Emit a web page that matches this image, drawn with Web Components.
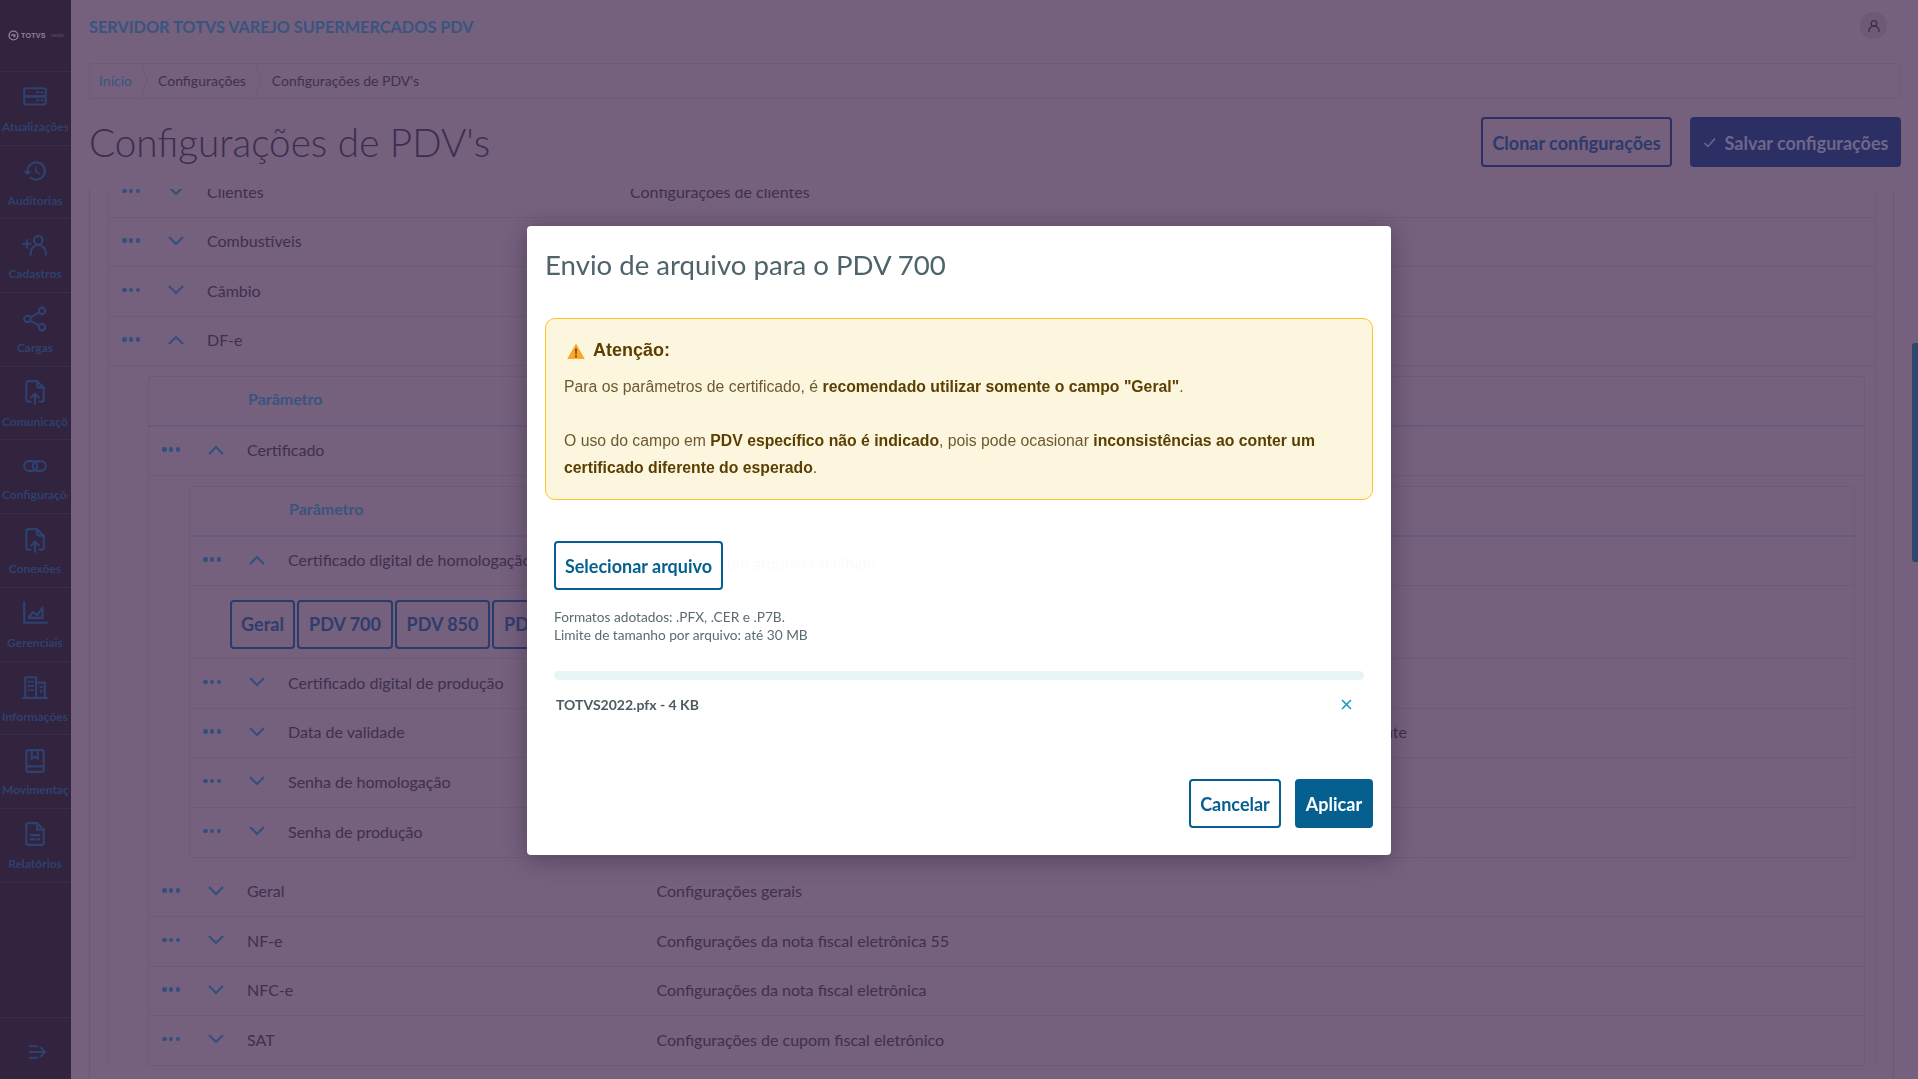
<!DOCTYPE html>
<html lang="pt-BR">
<head>
<meta charset="utf-8">
<title>Configurações de PDV's</title>
<style>
  html, body { margin: 0; height: 100%; overflow: hidden; }
  body {
    --app-font: Lato, "Noto Sans", sans-serif;
    font-family: var(--app-font);
    background: #75607d;
    display: flex;
    height: 1079px;
  }
</style>
</head>
<body>
<app-sidebar>
  <nav-item icon="server">Atualizações</nav-item>
  <nav-item icon="history">Auditorias</nav-item>
  <nav-item icon="adduser">Cadastros</nav-item>
  <nav-item icon="share">Cargas</nav-item>
  <nav-item icon="upload">Comunicações</nav-item>
  <nav-item icon="link">Configurações</nav-item>
  <nav-item icon="upload">Conexões</nav-item>
  <nav-item icon="chart">Gerenciais</nav-item>
  <nav-item icon="building">Informações</nav-item>
  <nav-item icon="book">Movimentações</nav-item>
  <nav-item icon="report">Relatórios</nav-item>
</app-sidebar>

<app-main>
  <page-header></page-header>
  <tree-area>
    <tree-row label="Clientes" desc="Configurações de clientes"></tree-row>
    <tree-row label="Combustíveis"></tree-row>
    <tree-row label="Câmbio"></tree-row>
    <tree-row label="DF-e" open></tree-row>
    <tree-table level="1">
      <tree-row label="Certificado" open></tree-row>
      <tree-table level="2">
        <tree-row label="Certificado digital de homologação" open></tree-row>
        <tab-strip>
          <tab-button style="width:65px">Geral</tab-button>
          <tab-button style="width:96px">PDV 700</tab-button>
          <tab-button style="width:95px">PDV 850</tab-button>
          <tab-button style="width:96px">PDV 900</tab-button>
        </tab-strip>
        <tree-row label="Certificado digital de produção"></tree-row>
        <tree-row label="Data de validade" desc="nte" style="--desc-x:1195px"></tree-row>
        <tree-row label="Senha de homologação"></tree-row>
        <tree-row label="Senha de produção" last></tree-row>
      </tree-table>
      <tree-row label="Geral" desc="Configurações gerais" style="margin-top:9.700px"></tree-row>
      <tree-row label="NF-e" desc="Configurações da nota fiscal eletrônica 55"></tree-row>
      <tree-row label="NFC-e" desc="Configurações da nota fiscal eletrônica"></tree-row>
      <tree-row label="SAT" desc="Configurações de cupom fiscal eletrônico"></tree-row>
    </tree-table>
  </tree-area>
</app-main>

<page-scrollbar></page-scrollbar>

<upload-modal title-text="Envio de arquivo para o PDV 700"></upload-modal>

<script>
const ICONS = {
  server: '<rect x="2" y="3" width="20" height="7.5" rx="2"/><rect x="2" y="10.5" width="20" height="7.5" rx="2"/><path d="M14 6.8h1M18 6.8h1M14 14.2h1M18 14.2h1"/>',
  history: '<path fill="currentColor" stroke="none" d="M13 3a9 9 0 0 0-9 9H1l3.9 3.9L9 12H6c0-3.9 3.1-7 7-7s7 3.1 7 7-3.1 7-7 7c-1.9 0-3.7-.8-4.9-2.1l-1.4 1.4A9 9 0 1 0 13 3zm-1 5v5l4.3 2.5.7-1.2-3.5-2.1V8H12z"/>',
  adduser: '<circle cx="15" cy="7.5" r="4"/><path d="M8 21v-2a7 7 0 0 1 14 0v2M1 11h7M4.5 7.5v7"/>',
  share: '<circle cx="18.5" cy="4.5" r="3"/><circle cx="5" cy="12" r="3"/><circle cx="18.5" cy="19.5" r="3"/><path d="M7.7 10.5l8.2-4.6M7.7 13.5l8.2 4.6"/>',
  upload: '<path d="M8 21H6a2 2 0 0 1-2-2V4a2 2 0 0 1 2-2h8l6 6v11a2 2 0 0 1-2 2h-2"/><path d="M14 2v4a2 2 0 0 0 2 2h4"/><path d="M12 23v-9M8.5 17l3.5-3.5 3.5 3.5"/>',
  link: '<rect x="2" y="7.500" width="12" height="9" rx="4.500"/><rect x="10" y="7.500" width="12" height="9" rx="4.500"/>',
  chart: '<path d="M2 2v19h21"/><path d="M6 16.500l4-5.500 4 3 5-7v9.500z"/>',
  building: '<path d="M3 22V3h10v19M13 8h8v14M1 22h22"/><path d="M6 7h1M9 7h1M6 11h1M9 11h1M6 15h1M9 15h1M17 12h1M17 16h1"/>',
  book: '<path d="M4 19V4a2 2 0 0 1 2-2h13a1 1 0 0 1 1 1v18a1 1 0 0 1-1 1H6.500A2.500 2.500 0 0 1 4 19.500 2.500 2.500 0 0 1 6.500 17H20"/><path d="M9 2v8l2.800-2 2.800 2V2"/>',
  report: '<path d="M14 2H6a2 2 0 0 0-2 2v16a2 2 0 0 0 2 2h12a2 2 0 0 0 2-2V8z"/><path d="M14 2v6h6M8 13h8M8 17h4M14.500 17h1.500"/>'
};

class AppSidebar extends HTMLElement {
  constructor() {
    super();
    this.attachShadow({ mode: "open" }).innerHTML = `
      <style>
        :host { display: flex; flex-direction: column; flex: none; width: 71px; height: 1079px; background: #32233f; position: relative; z-index: 1; }
        .logo { height: 72px; border-bottom: 1px solid #3a2b48; display: flex; align-items: center; gap: 2px; padding-left: 8px; box-sizing: border-box; color: #8f8496; }
        .logo b { font: 700 8px/1 "Liberation Sans", sans-serif; letter-spacing: .2px; transform: scaleX(.9); transform-origin: left; }
        .logo i { font: 5px/1 "Liberation Sans", sans-serif; color: #5f5168; margin-left: 0; }
        .items { flex: 1; }
        .foot { height: 62px; border-top: 1px solid #3a2b48; display: flex; align-items: center; justify-content: center; color: #2e416f; padding: 6px 0 0 3px; box-sizing: border-box; }
      </style>
      <div class="logo">
        <svg width="11" height="11" viewBox="0 0 12 12" fill="none" stroke="currentColor" stroke-width="1.500"><circle cx="6" cy="6" r="4.800"/><path d="M3.500 5.500h4a1.500 1.500 0 0 1-1.500 2"/></svg>
        <b>TOTVS</b><i>varejo</i>
      </div>
      <div class="items"><slot></slot></div>
      <div class="foot">
        <svg width="19" height="16" viewBox="0 0 20 16" fill="none" stroke="currentColor" stroke-width="2"><path d="M1 2h10M1 8h17M1 14h10M13 3l5 5-5 5"/></svg>
      </div>`;
  }
}

class NavItem extends HTMLElement {
  constructor() {
    super();
    this.attachShadow({ mode: "open" });
  }
  connectedCallback() {
    this.shadowRoot.innerHTML = `
      <style>
        :host { display: flex; flex-direction: column; align-items: center; height: 73.7px; box-sizing: border-box; border-bottom: 1px solid #3a2b48; color: #2e416f; overflow: hidden; padding-right: 1px; }
        svg { margin-top: 12.500px; flex: none; }
        .label { margin-top: 8.500px; width: 66px; text-align: center; font: 700 12px/16px var(--app-font); white-space: nowrap; overflow: hidden; display: flex; justify-content: center; }
        .label span { flex: none; }
        :host(.clip) .label { justify-content: flex-start; }
      </style>
      <svg width="26" height="26" viewBox="0 0 24 24" fill="none" stroke="currentColor" stroke-width="2" stroke-linecap="round" stroke-linejoin="round">${ICONS[this.getAttribute("icon")]}</svg>
      <div class="label"><span><slot></slot></span></div>`;
    if (this.textContent.length > 11) this.classList.add("clip");
  }
}

class AppMain extends HTMLElement {
  constructor() {
    super();
    this.attachShadow({ mode: "open" }).innerHTML = `
      <style>
        :host { display: flex; flex-direction: column; flex: 1; min-width: 0; height: 1079px; }
      </style>
      <slot></slot>`;
  }
}

class PageHeader extends HTMLElement {
  constructor() {
    super();
    this.attachShadow({ mode: "open" }).innerHTML = `
      <style>
        :host { display: block; height: 189px; flex: none; padding: 0 17px 0 18px; box-sizing: border-box; }
        .top { height: 63px; display: flex; justify-content: space-between; align-items: flex-start; }
        .brand { margin-top: 16px; font: 700 16.300px/22px var(--app-font); color: #38557f; white-space: nowrap; }
        .avatar { margin: 12px 14px 0 0; width: 27px; height: 27px; border-radius: 50%; background: #6e5a77; display: flex; align-items: center; justify-content: center; color: #3d2d52; }
        .crumbs { height: 36px; border: 1px solid #6f5a77; border-radius: 3px; box-sizing: border-box; display: flex; align-items: center; padding: 0 0 2px 9px; font: 14px var(--app-font); color: #3f3052; }
        .crumbs .home { color: #38557f; }
        .crumbs svg { margin: 0 10px 0 8px; flex: none; }
        .row { display: flex; align-items: flex-start; margin-top: 18px; }
        h1 { margin: -1px 0 0; flex: 1; font: 300 38.700px/52px var(--app-font); color: #3d2d52; }
        .btn { height: 50px; padding-top: 1px; box-sizing: border-box; border-radius: 4px; font: 700 18px/46px var(--app-font); border: 2px solid #2c2f63; white-space: nowrap; display: flex; align-items: center; justify-content: center; }
        .clone { width: 191px; color: #2c3a6c; margin-right: 18px; }
        .save { width: 211px; background: #2c2f63; color: #6f668c; gap: 9px; }
      </style>
      <div class="top">
        <div class="brand">SERVIDOR TOTVS VAREJO SUPERMERCADOS PDV</div>
        <div class="avatar"><svg width="14" height="14" viewBox="0 0 14 14" fill="none" stroke="currentColor" stroke-width="1.300"><circle cx="7" cy="4.500" r="2.800"/><path d="M2 13v-1a5 5 0 0 1 10 0v1"/></svg></div>
      </div>
      <div class="crumbs">
        <span class="home">Início</span>
        <svg width="8" height="34" viewBox="0 0 8 34" fill="none" stroke="#6f5a77"><path d="M1 0l6 17-6 17"/></svg>
        <span>Configurações</span>
        <svg width="8" height="34" viewBox="0 0 8 34" fill="none" stroke="#6f5a77"><path d="M1 0l6 17-6 17"/></svg>
        <span>Configurações de PDV's</span>
      </div>
      <div class="row">
        <h1>Configurações de PDV's</h1>
        <div class="btn clone">Clonar configurações</div>
        <div class="btn save"><svg width="13" height="11" viewBox="0 0 13 11" fill="none" stroke="#6f668c" stroke-width="1.500"><path d="M1.500 6l3.500 3.500 7-8"/></svg>Salvar configurações</div>
      </div>`;
  }
}

class TreeArea extends HTMLElement {
  constructor() {
    super();
    this.attachShadow({ mode: "open" }).innerHTML = `
      <style>
        :host { display: block; flex: 1; overflow: hidden; margin: 0 24px 0 18px; border-left: 1px solid #6c5874; border-right: 1px solid #6c5874; box-sizing: border-box; --desc-x: 522px; }
        .inner { margin: -21px 17px 0 18px; border-left: 1px solid #6f5a77; border-right: 1px solid #6f5a77; }
      </style>
      <div class="inner"><slot></slot></div>`;
  }
}

class TreeTable extends HTMLElement {
  constructor() {
    super();
    this.attachShadow({ mode: "open" });
  }
  connectedCallback() {
    const level = this.getAttribute("level");
    this.shadowRoot.innerHTML = `
      <style>
        :host { display: block; margin: ${level === "1" ? "10px 10px 0 39px" : "10px 9px 0 40px"}; --desc-x: 508.500px; border: 1px solid #6f5a77; border-bottom: ${level === "1" ? "0" : "1px solid #6f5a77"}; border-radius: 3px 3px 0 0; }
        .head { height: 49.500px; box-sizing: border-box; border-bottom: 2px solid #675a80; padding: 0 0 4px 99px; display: flex; align-items: center; font: 700 16px var(--app-font); color: #38557f; }
      </style>
      <div class="head">Parâmetro</div>
      <slot></slot>`;
  }
}

class TreeRow extends HTMLElement {
  constructor() {
    super();
    this.attachShadow({ mode: "open" });
  }
  connectedCallback() {
    const open = this.hasAttribute("open");
    const desc = this.getAttribute("desc");
    this.shadowRoot.innerHTML = `
      <style>
        :host { display: block; height: 49.500px; box-sizing: border-box; border-bottom: 1px solid #6f5a77; white-space: nowrap; }
        :host([last]) { border-bottom: 0; }
        .row { display: flex; align-items: center; height: 100%; padding-left: 13px; font: 16px/20px var(--app-font); color: #3f2f50; }
        .dots { width: 18px; display: flex; justify-content: space-between; margin: -3px 28px 0 0; flex: none; }
        .dots i { width: 4.500px; height: 4.500px; border-radius: 50%; background: #32507e; }
        .chev { width: 16px; margin-right: 23px; flex: none; color: #32507e; display: block; margin-top: -2px; }
        .label { width: calc(var(--desc-x) - 99px); flex: none; margin-top: -1px; }
        .desc { margin-top: -1px; }
      </style>
      <div class="row">
        <div class="dots"><i></i><i></i><i></i></div>
        <svg class="chev" width="16" height="10" viewBox="0 0 16 10" fill="none" stroke="currentColor" stroke-width="2"><path d="${open ? "M1 9l7-7 7 7" : "M1 1l7 7 7-7"}"/></svg>
        <div class="label">${this.getAttribute("label")}</div>
        ${desc ? `<div class="desc">${desc}</div>` : ""}
      </div>`;
  }
}

class TabStrip extends HTMLElement {
  constructor() {
    super();
    this.attachShadow({ mode: "open" }).innerHTML = `
      <style>
        :host { display: flex; gap: 2px; height: 73px; box-sizing: border-box; padding: 13.500px 0 0 40px; border-bottom: 1px solid #6f5a77; overflow: hidden; }
      </style>
      <slot></slot>`;
  }
}

class TabButton extends HTMLElement {
  constructor() {
    super();
    this.attachShadow({ mode: "open" }).innerHTML = `
      <style>
        :host { display: flex; align-items: center; justify-content: center; flex: none; height: 49px; box-sizing: border-box; border: 2px solid #2c3a6c; border-radius: 4px; font: 700 18px var(--app-font); color: #2f3d6e; }
      </style>
      <slot></slot>`;
  }
}

class PageScrollbar extends HTMLElement {
  constructor() {
    super();
    this.attachShadow({ mode: "open" }).innerHTML = `
      <style>
        :host { display: block; position: fixed; right: 0; top: 343px; width: 6px; height: 219px; background: #33466f; border-radius: 3px 0 0 3px; }
      </style>`;
  }
}

class UploadModal extends HTMLElement {
  constructor() {
    super();
    this.attachShadow({ mode: "open" });
  }
  connectedCallback() {
    this.shadowRoot.innerHTML = `
      <style>
        :host { display: block; position: fixed; left: 527px; top: 226px; width: 864px; height: 629px; box-sizing: border-box; background: #fff; border-radius: 4px; box-shadow: 0 4px 24px rgba(30,15,40,.35); padding: 0 18px; font-family: var(--app-font); }
        h2 { margin: 0; padding-top: 21px; font: 400 27.600px/36px var(--app-font); color: #4f636b; }
        .alert { margin-top: 35px; height: 182px; box-sizing: border-box; border: 1px solid #ffc328; border-radius: 10px; background: #fdf6df; padding: 17px 18px; font: 15.780px/27px "Liberation Sans", Arial, sans-serif; color: #6b5a30; }
        .alert b { color: #5a3f00; }
        .alert-head { display: flex; align-items: center; gap: 8px; font: 700 18px/27px "Liberation Sans", Arial, sans-serif; color: #5a3f00; margin: 1px 0 9px 3px; }
        .alert p { margin: 0; }
        .upload { display: flex; align-items: center; margin: 41px 0 0 9px; }
        .btn { box-sizing: border-box; height: 49px; border: 2px solid #055f8f; border-radius: 4px; color: #055f8f; display: flex; align-items: center; justify-content: center; font: 700 18px var(--app-font); white-space: nowrap; }
        .ghost { font: 16px var(--app-font); color: #fafafa; margin: -6px 0 0 4px; }
        .hint { margin: 18px 0 0 9px; font: 13.700px/18px var(--app-font); color: #5b6b73; }
        .bar { margin: 27px 9px 0; height: 9px; border-radius: 5px; background: #e8f5f7; }
        .file { display: flex; align-items: center; justify-content: space-between; margin: 14px 21px 0 11px; height: 20px; font: 700 14px var(--app-font); color: #4d5b60; }
        .actions { display: flex; justify-content: flex-end; gap: 14px; margin-top: 65px; }
        .solid { background: #055f8f; color: #fff; }
      </style>
      <h2>${this.getAttribute("title-text")}</h2>
      <div class="alert">
        <div class="alert-head">
          <svg width="18" height="16" viewBox="0 0 18 16"><path d="M9 0.500L17.800 16H0.200z" fill="#fba72b"/><path d="M8.200 5.500h1.600l-.3 6h-1zM8.200 12.500h1.600v1.800H8.200z" fill="#4a3500"/></svg>
          Atenção:
        </div>
        <p>Para os parâmetros de certificado, é <b>recomendado utilizar somente o campo "Geral"</b>.</p>
        <p>&nbsp;</p>
        <p>O uso do campo em <b>PDV específico não é indicado</b>, pois pode ocasionar <b>inconsistências ao conter um certificado diferente do esperado</b>.</p>
      </div>
      <div class="upload">
        <div class="btn" style="width:169px">Selecionar arquivo</div>
        <span class="ghost">um arquivo escolhido</span>
      </div>
      <div class="hint">Formatos adotados: .PFX, .CER e .P7B.<br>Limite de tamanho por arquivo: até 30 MB</div>
      <div class="bar"></div>
      <div class="file">
        <span>TOTVS2022.pfx - 4 KB</span>
        <svg width="11" height="11" viewBox="0 0 11 11" fill="none" stroke="#1a9bbd" stroke-width="1.600"><path d="M1 1l9 9M10 1l-9 9"/></svg>
      </div>
      <div class="actions">
        <div class="btn" style="width:92px">Cancelar</div>
        <div class="btn solid" style="width:78px">Aplicar</div>
      </div>`;
  }
}

customElements.define("app-sidebar", AppSidebar);
customElements.define("nav-item", NavItem);
customElements.define("app-main", AppMain);
customElements.define("page-header", PageHeader);
customElements.define("tree-area", TreeArea);
customElements.define("tree-table", TreeTable);
customElements.define("tree-row", TreeRow);
customElements.define("tab-strip", TabStrip);
customElements.define("tab-button", TabButton);
customElements.define("page-scrollbar", PageScrollbar);
customElements.define("upload-modal", UploadModal);
</script>
</body>
</html>
